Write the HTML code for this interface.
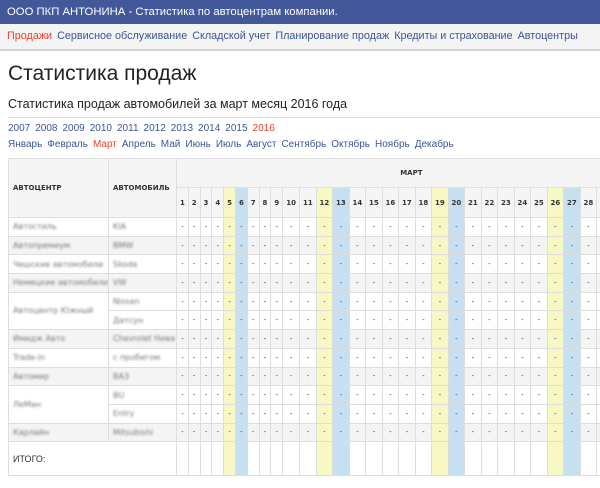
<!DOCTYPE html>
<html><head><meta charset="utf-8"><style>
body{margin:0;width:600px;height:488px;overflow:hidden;background:#fff;font-family:"Liberation Sans","DejaVu Sans",sans-serif;position:relative}
.top{height:24px;background:#43589a;color:#fff;font-size:11.3px;line-height:24px;padding-left:7px;white-space:nowrap}
.nav{height:25px;background:#f4f4f4;border-bottom:2px solid #d4d4d4;font-size:10.8px;line-height:25px;padding-left:7px;color:#3d5596;white-space:nowrap}
.nav span{margin-right:5px}
.r{color:#e8412c!important}
h1{font-weight:normal;font-size:21px;margin:0;position:absolute;top:62px;left:8px;color:#222}
h2{font-weight:normal;font-size:12.5px;margin:0;position:absolute;top:97px;left:8px;color:#222}
.hr{position:absolute;top:117px;left:8px;width:592px;border-top:1px solid #ddd}
.yrs{position:absolute;top:123px;left:8px;font-size:10px;color:#3d5596;white-space:nowrap}
.mon{position:absolute;top:139px;left:8px;font-size:10px;color:#3d5596;white-space:nowrap}
.yrs span,.mon span{margin-right:5px}
.wrap{position:absolute;top:158px;left:8px;width:592px;height:330px;overflow:hidden}
table{width:638px;border-collapse:collapse;table-layout:fixed;font-family:"DejaVu Sans",sans-serif;font-size:7px}
td,th{border:1px solid #ddd;padding:0;text-align:center;color:#333;overflow:hidden;white-space:nowrap}
th{background:#f5f5f5;font-weight:bold;font-size:7px}
.l{text-align:left;padding-left:4px}
.b{color:#777;filter:blur(1px);font-size:8px}
tr.d td{height:17.7px}
tr.g td{background:#f4f4f4}
.y{background:#f8f8c4!important}
.u{background:#c7e0f1!important}
</style></head><body>
<div class="top">ООО ПКП АНТОНИНА - Статистика по автоцентрам компании.</div>
<div class="nav"><span class="r">Продажи</span><span>Сервисное обслуживание</span><span>Складской учет</span><span>Планирование продаж</span><span>Кредиты и страхование</span><span>Автоцентры</span></div>
<h1>Статистика продаж</h1>
<h2>Статистика продаж автомобилей за март месяц 2016 года</h2>
<div class="hr"></div>
<div class="yrs"><span>2007</span><span>2008</span><span>2009</span><span>2010</span><span>2011</span><span>2012</span><span>2013</span><span>2014</span><span>2015</span><span class="r">2016</span></div>
<div class="mon"><span>Январь</span><span>Февраль</span><span class="r">Март</span><span>Апрель</span><span>Май</span><span>Июнь</span><span>Июль</span><span>Август</span><span>Сентябрь</span><span>Октябрь</span><span>Ноябрь</span><span>Декабрь</span></div>
<div class="wrap"><table id="t"></table></div>
<script>
var w=[100,68];for(var i=1;i<=31;i++)w.push(i<10?11.8:(i==10?17:16.5));
var h='<colgroup>';w.forEach(function(x){h+='<col style="width:'+x+'px">'});h+='</colgroup>';
function cls(i){return (i%7==5)?'y':(i%7==6)?'u':''}
h+='<tr style="height:29px"><th rowspan=2 class="l">АВТОЦЕНТР</th><th rowspan=2 class="l">АВТОМОБИЛЬ</th><th colspan=31>МАРТ</th></tr><tr style="height:30px">';
for(i=1;i<=31;i++)h+='<th class="'+cls(i)+'">'+i+'</th>';h+='</tr>';
var rows=[['Автостиль','KIA',1],['Автопремиум','BMW',1],['Чешские автомобили','Skoda',1],['Немецкие автомобили','VW',1],['Автоцентр Южный','Nissan',2],[null,'Датсун'],['Имидж Авто','Chevrolet Нива',1],['Trade-in','с пробегом',1],['Автомир','ВАЗ',1],['ЛеМан','BU',2],[null,'Entry'],['Карлайн','Mitsubishi',1]];
var g=0;
rows.forEach(function(r){
 if(r[0]!==null)g++;
 h+='<tr class="d'+(g%2==0?' g':'')+'">';
 if(r[0]!==null)h+='<td class="l" rowspan='+r[2]+'><span class="b">'+r[0]+'</span></td>';
 h+='<td class="l"><span class="b">'+r[1]+'</span></td>';
 for(i=1;i<=31;i++)h+='<td class="'+cls(i)+'">-</td>';
 h+='</tr>';
});
h+='<tr style="height:34px"><td colspan=2 class="l" style="font-family:Liberation Sans,sans-serif;font-size:9px">ИТОГО:</td>';
for(i=1;i<=31;i++)h+='<td class="'+cls(i)+'"></td>';h+='</tr>';
document.getElementById('t').innerHTML=h;
</script>
</body></html>
